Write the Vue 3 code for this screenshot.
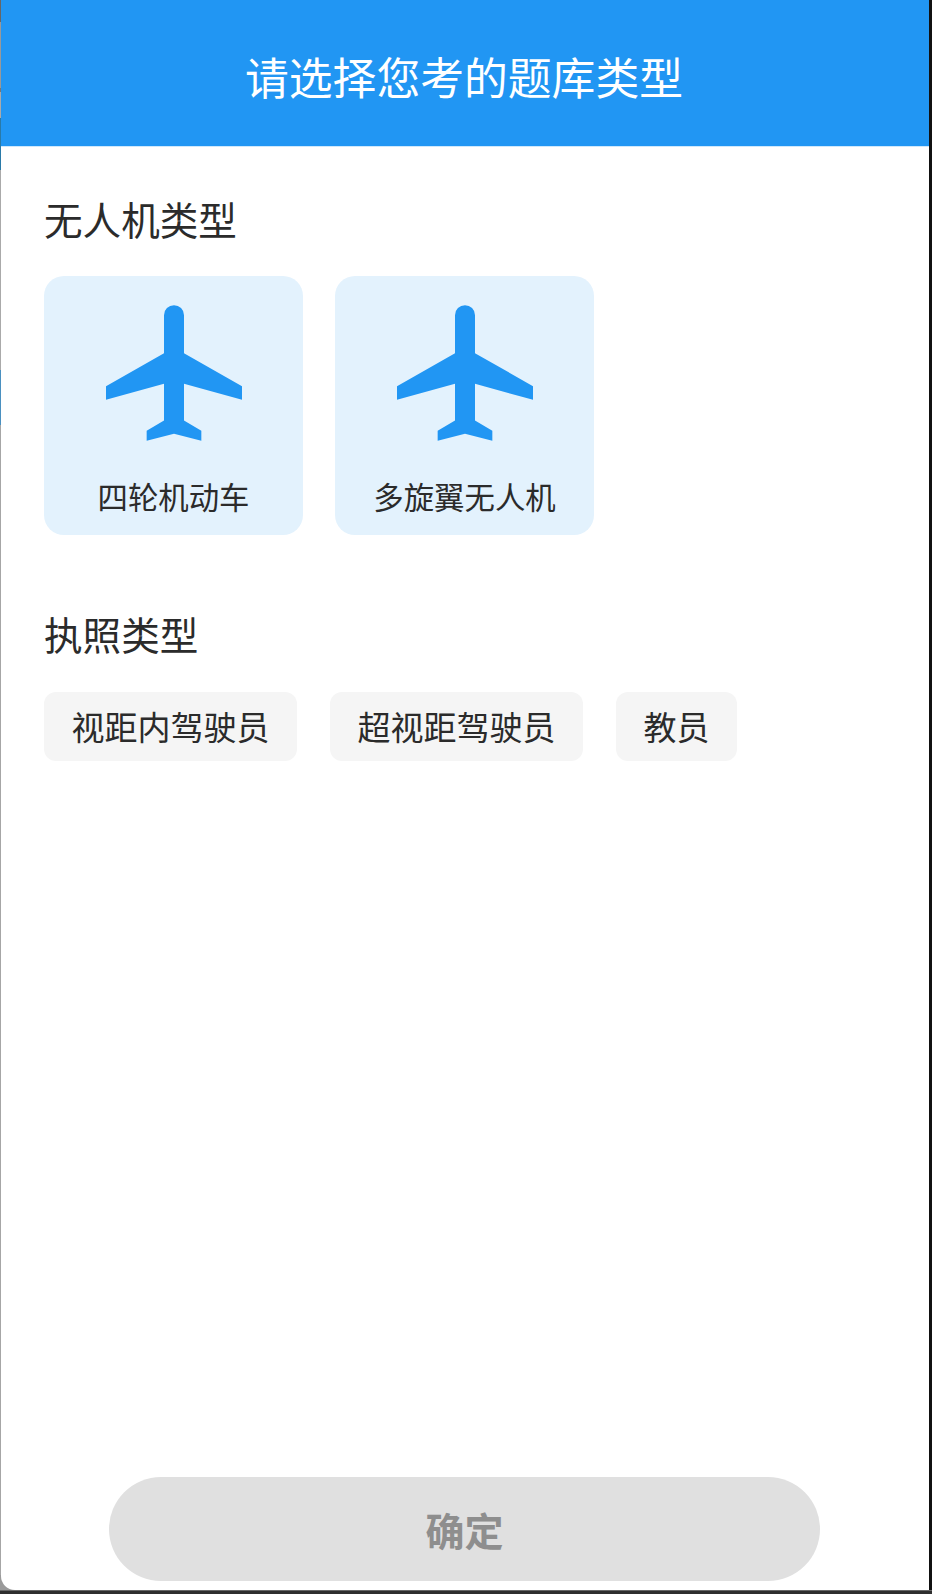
<script setup>
const vehicles = ['四轮机动车', '多旋翼无人机']
const licenses = ['视距内驾驶员', '超视距驾驶员', '教员']
</script>

<template>
  <div class="frame">
    <div class="screen">
      <header class="header">请选择您考的题库类型</header>
      <main class="content">
        <h2 class="section-title">无人机类型</h2>
        <div class="cards">
          <div v-for="item in vehicles" :key="item" class="card">
            <svg class="plane" viewBox="0 0 408 407" aria-hidden="true">
              <path d="M174 30a30 30 0 0 1 60 0V144L408 243V284L234 236V346L286 377V407L204 386L122 407V377L174 346V236L0 284V243L174 144V30z" />
            </svg>
            <span class="card-label">{{ item }}</span>
          </div>
        </div>
        <h2 class="section-title second">执照类型</h2>
        <div class="tags">
          <span v-for="item in licenses" :key="item" class="tag">{{ item }}</span>
        </div>
      </main>
      <footer class="footer">
        <button class="confirm" type="button">确定</button>
      </footer>
    </div>
  </div>
</template>

<style>
html, body { margin: 0; background: #111; }
</style>

<style scoped>
.frame {
  width: 932px;
  height: 1594px;
  box-sizing: border-box;
  padding: 0 3px 4px 1px;
  background-color: #111;
  background-image:
    linear-gradient(#666, #666 1px, #2e2e2e 1px),
    linear-gradient(#9a9a9a, #9a9a9a),
    linear-gradient(#666 0 22px, #999 22px 88px, #777 88px 92px, #aaa 92px 118px, #2a7aa8 118px 170px, #aaa 170px 370px, #4a90c0 370px 425px, #a6a6a6 425px);
  background-size: 100% 4px, 15px 15px, 1px 100%;
  background-position: 0 100%, 0 calc(100% - 4px), 0 0;
  background-repeat: no-repeat;
  font-family: "Noto Sans CJK SC", "Noto Sans", sans-serif;
  overflow: hidden;
}
.screen {
  height: 100%;
  display: flex;
  flex-direction: column;
  background: #fff;
  border-bottom-left-radius: 14px;
}
.header {
  height: 147px;
  box-sizing: border-box;
  flex: none;
  padding-right: 2px;
  border-bottom: 1px solid #cfe8fc;
  background: #2196f3;
  color: #fff;
  font-size: 43.8px;
  line-height: 152px;
  text-align: center;
}
.content {
  flex: 1;
  padding: 0 43px;
}
.section-title {
  margin: 49px 0 0;
  font-size: 38.6px;
  font-weight: 400;
  line-height: 44px;
  color: #2b2b2b;
}
.section-title.second {
  margin-top: 76px;
}
.cards {
  display: flex;
  gap: 32px;
  margin-top: 36px;
}
.card {
  width: 259px;
  height: 259px;
  box-sizing: border-box;
  padding-top: 29px;
  border-radius: 20px;
  background: #e3f2fd;
  display: flex;
  flex-direction: column;
  align-items: center;
}
.plane {
  width: 136px;
  height: 136px;
  fill: #2196f3;
}
.card-label {
  margin-top: 33px;
  font-size: 30.4px;
  line-height: 44px;
  color: #2b2b2b;
}
.tags {
  display: flex;
  gap: 33px;
  margin-top: 37px;
}
.tag {
  height: 69px;
  padding: 0 27.5px;
  border-radius: 12px;
  background: #f5f5f5;
  color: #2b2b2b;
  font-size: 33px;
  line-height: 69px;
}
.footer {
  flex: none;
  display: flex;
  justify-content: center;
  padding: 0 1px 9px 0;
}
.confirm {
  width: 711px;
  height: 104px;
  border: 0;
  border-radius: 52px;
  background: #e0e0e0;
  color: #8e8e8e;
  font-family: inherit;
  font-size: 39px;
  font-weight: 700;
}
</style>
